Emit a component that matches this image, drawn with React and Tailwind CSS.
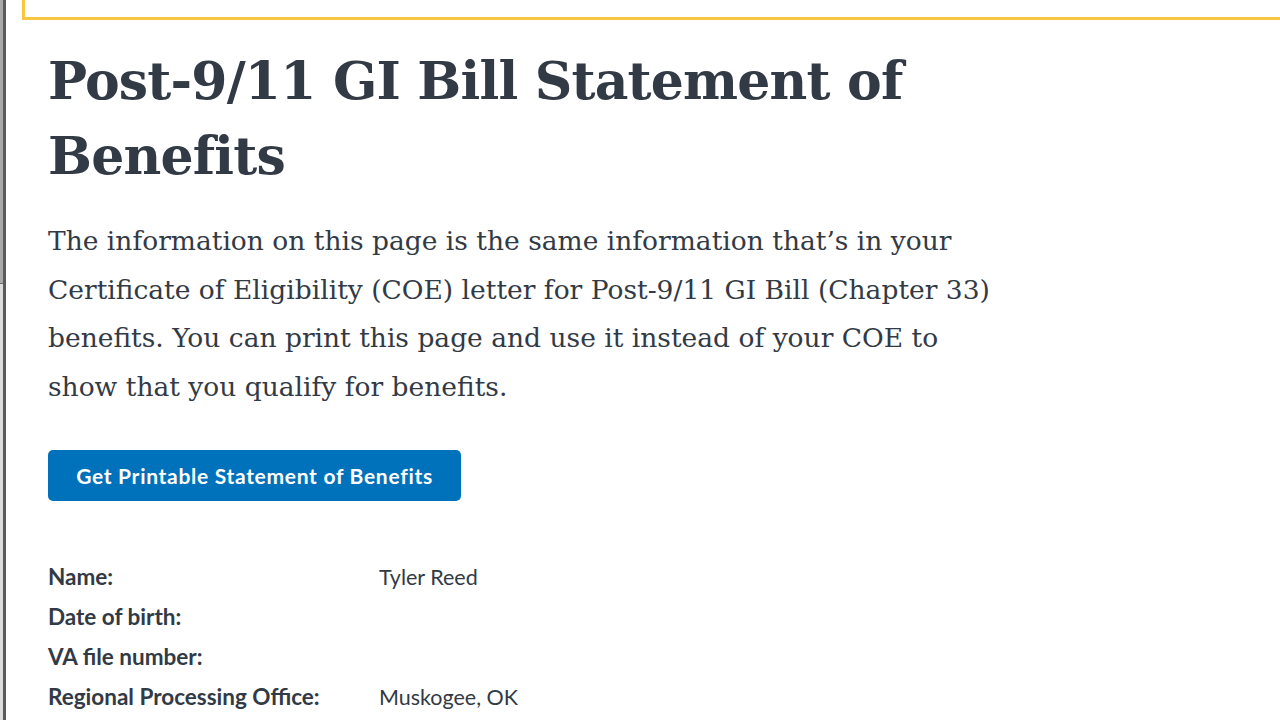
import React from "react";

const rows = [
  { label: "Name:", value: "Tyler Reed" },
  { label: "Date of birth:", value: "" },
  { label: "VA file number:", value: "" },
  { label: "Regional Processing Office:", value: "Muskogee, OK" },
];

export default function App() {
  return (
    <div className="h-[720px] overflow-hidden bg-white flex">
      {/* window edge */}
      <div className="w-[6px] flex shrink-0">
        <div className="w-[3px] flex flex-col">
          <div className="h-[283px] bg-[#a9a9a9]" />
          <div className="h-[1px] bg-[#6b6b6b]" />
          <div className="flex-1 bg-[#dcdcdc]" />
        </div>
        <div className="w-[3px] bg-[#5a5a5a]" />
      </div>

      <div className="flex-1 min-w-0">
        {/* alert box, mostly scrolled out of view */}
        <div className="ml-[16px] h-[20px] border-l-[3px] border-b-[3px] border-[#f9c642] -mr-4" />

        <div className="pl-[42px] pt-[23px]">
          <h1 className="text-[#323a45] font-bold text-[52px] leading-[75px] tracking-[-0.8px] font-['DejaVu_Serif',serif] w-[900px]">
            Post-9/11 GI Bill Statement of Benefits
          </h1>

          <p className="mt-[24px] w-[950px] text-[#323a45] text-[26.5px] leading-[48.5px] font-['DejaVu_Serif',serif]">
            The information on this page is the same information that’s in your Certificate of Eligibility (COE) letter for Post-9/11 GI Bill (Chapter 33) benefits. You can print this page and use it instead of your COE to show that you qualify for benefits.
          </p>

          <button className="mt-[39px] h-[51px] w-[413px] rounded-[5px] bg-[#0071bb] text-white font-bold text-[21px] tracking-[0.7px] font-['Lato',sans-serif]">
            Get Printable Statement of Benefits
          </button>

          <div className="mt-[56px] flex flex-col font-['Lato',sans-serif] text-[22.5px] text-[#323a45]">
            {rows.map((r) => (
              <div key={r.label} className="flex h-[40px] items-center">
                <div className="w-[331px] font-bold">{r.label}</div>
                <div className="text-[21.5px]">{r.value}</div>
              </div>
            ))}
          </div>
        </div>
      </div>
    </div>
  );
}
